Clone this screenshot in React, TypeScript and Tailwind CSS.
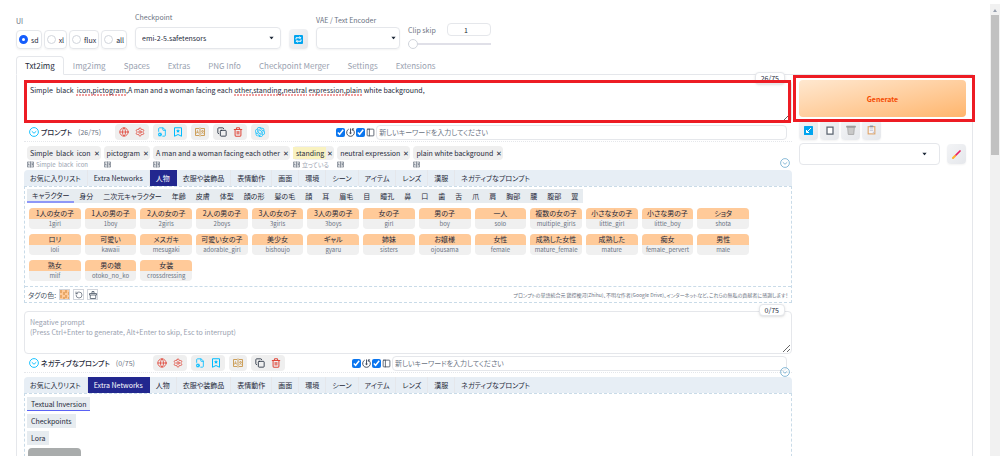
import React, { useState } from 'react';
import { Copy, FileCog, Globe, PanelLeft, RotateCcw, Settings, Trash2 } from 'lucide-react';
import { SiOpenai } from 'react-icons/si';

const mainTabs = ['Txt2img', 'Img2img', 'Spaces', 'Extras', 'PNG Info', 'Checkpoint Merger', 'Settings', 'Extensions'];

const categories = [
  'お気に入りリスト', 'Extra Networks', '人物', '衣服や装飾品', '表情動作', '画面', '環境',
  'シーン', 'アイテム', 'レンズ', '漢服', 'ネガティブなプロンプト',
];

const subCategories = [
  'キャラクター', '身分', '二次元キャラクター', '年齢', '皮膚', '体型', '顔の形', '髪の毛', '顔', '耳', '眉毛',
  '目', '瞳孔', '鼻', '口', '歯', '舌', '爪', '肩', '胸部', '腰', '腹部', '翼',
];

const keywords = [
  ['1人の女の子', '1girl'], ['1人の男の子', '1boy'], ['2人の女の子', '2girls'], ['2人の男の子', '2boys'],
  ['3人の女の子', '3girls'], ['3人の男の子', '3boys'], ['女の子', 'girl'], ['男の子', 'boy'], ['一人', 'solo'],
  ['複数の女の子', 'multiple_girls'], ['小さな女の子', 'little_girl'], ['小さな男の子', 'little_boy'], ['ショタ', 'shota'],
  ['ロリ', 'loli'], ['可愛い', 'kawaii'], ['メスガキ', 'mesugaki'], ['可愛い女の子', 'adorable_girl'], ['美少女', 'bishoujo'],
  ['ギャル', 'gyaru'], ['姉妹', 'sisters'], ['お嬢様', 'ojousama'], ['女性', 'female'], ['成熟した女性', 'mature_female'],
  ['成熟した', 'mature'], ['痴女', 'female_pervert'], ['男性', 'male'],
  ['熟女', 'milf'], ['男の娘', 'otoko_no_ko'], ['女装', 'crossdressing'],
];

const tags = [
  { text: 'Simple  black  icon', note: 'Simple  black  icon' },
  { text: 'pictogram', note: '' },
  { text: 'A man and a woman facing each other', note: '' },
  { text: 'standing', note: '立っている', marked: true },
  { text: 'neutral expression', note: '' },
  { text: 'plain white background', note: '' },
];

const Caret: React.FC<{ className?: string }> = ({ className = 'right-[7px]' }) => (
  <svg viewBox="0 0 6 4" className={`pointer-events-none absolute top-1/2 h-[3px] w-[5px] -translate-y-1/2 fill-gray-800 ${className}`}>
    <path d="M0 0h6L3 4z" />
  </svg>
);

const ChevronCircle: React.FC<{ className: string }> = ({ className }) => (
  <svg viewBox="0 0 20 20" className={className} fill="none" stroke="currentColor" strokeWidth="1.8">
    <circle cx="10" cy="10" r="8.8" />
    <path d="M5.5 8.5l4.5 4 4.5-4" />
  </svg>
);

const TranslateIcon: React.FC<{ className: string }> = ({ className }) => (
  <svg viewBox="0 0 20 20" className={className} fill="none" stroke="currentColor" strokeWidth="1.8">
    <path d="M8 3H1v14h7M12 3h7v14h-7M10 1v18" />
    <path d="M3 13l2-6 2 6M3.5 11h3M12.5 8h5M15 6v2M17 8c-1 3-2 4-4.5 5.5M13 8c1 3 2 4 4.5 5.5" strokeWidth="1.3" />
  </svg>
);

const BookmarkStar: React.FC = () => (
  <svg viewBox="0 0 20 20" className="size-[10px] text-sky-400" fill="none" stroke="currentColor" strokeWidth="2">
    <path d="M3 1.5h14v17l-7-3.5-7 3.5z" />
    <path d="M10 4l1.2 2.6 2.8.3-2.1 1.9.6 2.8-2.5-1.4-2.5 1.4.6-2.8L6 6.9l2.800-.3z" fill="currentColor" stroke="none" />
  </svg>
);

const ClockArrow: React.FC = () => (
  <svg viewBox="0 0 20 20" className="size-[9px] text-gray-700" fill="none" stroke="currentColor" strokeWidth="2">
    <path d="M6 2.5a8.5 8.5 0 1 0 8 0M10 1v8" />
    <circle cx="10" cy="11" r="1.5" fill="currentColor" />
    <path d="M14 6V2h4" />
  </svg>
);

const IconGroup: React.FC<{ children: React.ReactNode }> = ({ children }) => (
  <div className="flex h-4 items-center gap-1.5 rounded-sm bg-[#efefef] px-1">{children}</div>
);

const ToolButton: React.FC<{ label: string; children: React.ReactNode }> = ({ label, children }) => (
  <button aria-label={label} className="flex size-[10px] items-center justify-center">{children}</button>
);

const PromptToolbar: React.FC<{ title: string; count: string; withAi?: boolean }> = ({ title, count, withAi }) => (
  <div className="flex h-[19px] items-center border-b border-dotted border-gray-200 px-[5px]">
    <ChevronCircle className="size-[10px] text-sky-400" />
    <h2 className="ml-0.5 font-medium text-gray-800">{title}</h2>
    <span className="ml-1.5 text-gray-500">{count}</span>
    <div className={withAi ? 'ml-[14px] flex gap-1' : 'ml-[18px] flex gap-1'}>
      <IconGroup>
        <ToolButton label="Language"><Globe className="size-[10px] text-[#e0493c]" /></ToolButton>
        <ToolButton label="Settings"><Settings className="size-[10px] text-[#e0493c]" /></ToolButton>
      </IconGroup>
      <IconGroup>
        <ToolButton label="History"><FileCog className="size-[10px] text-sky-400" /></ToolButton>
        <ToolButton label="Favorites"><BookmarkStar /></ToolButton>
      </IconGroup>
      <IconGroup>
        <ToolButton label="Translate"><TranslateIcon className="size-[10px] text-[#c8964a]" /></ToolButton>
      </IconGroup>
      <IconGroup>
        <ToolButton label="Copy"><Copy className="size-[10px] text-gray-800" /></ToolButton>
        <ToolButton label="Delete"><Trash2 strokeWidth={2.5} className="size-[10px] text-[#e0493c]" /></ToolButton>
      </IconGroup>
      {withAi && (
        <IconGroup>
          <ToolButton label="ChatGPT"><SiOpenai className="size-[10px] text-sky-400" /></ToolButton>
        </IconGroup>
      )}
    </div>
    <div className="ml-[67px] flex flex-1 items-center gap-px">
      <input type="checkbox" defaultChecked aria-label="History" className="size-[9px] accent-[#0b76ef]" />
      <ClockArrow />
      <input type="checkbox" defaultChecked aria-label="Panel" className="size-[9px] accent-[#0b76ef]" />
      <PanelLeft className="size-[9px] text-gray-700" />
      <input
        type="text"
        aria-label="keyword"
        placeholder="新しいキーワードを入力してください"
        className="h-[15px] min-w-0 flex-1 rounded-sm border border-gray-200 px-0.5 placeholder:text-gray-500"
      />
    </div>
  </div>
);

const CategoryBar: React.FC<{ active: string }> = ({ active }) => (
  <div className="flex h-4 overflow-hidden rounded-t-sm bg-[#e7eef5]">
    {categories.map((name) => (
      <button
        key={name}
        className={`border-r px-1.5 last:border-r-0 ${name === active ? 'border-[#22278f] bg-[#22278f] text-white' : 'border-gray-200 text-gray-800'}`}
      >
        {name}
      </button>
    ))}
  </div>
);

const SquareButton: React.FC<{ label: string; children: React.ReactNode }> = ({ label, children }) => (
  <button aria-label={label} className="flex h-5 w-[19px] items-center justify-center rounded-sm bg-linear-to-br from-gray-100 to-gray-200 shadow-xs">
    {children}
  </button>
);

const App: React.FC = () => {
  const [ui, setUi] = useState('sd');
  const [prompt, setPrompt] = useState(
    'Simple  black  icon,pictogram,A man and a woman facing each other,standing,neutral expression,plain white background,'
  );

  return (
    <div className="flex h-screen overflow-hidden bg-white font-['Noto_Sans_CJK_JP',sans-serif] text-[7px] leading-[10px] text-gray-800 [font-feature-settings:'palt']">
      <main className="min-w-0 flex-1 pl-4 pr-[17px] pt-[13px]">
        {/* Top settings */}
        <header className="flex h-9 items-end gap-2">
          <fieldset>
            <legend className="mb-1 text-gray-500">UI</legend>
            <div className="flex gap-0.5">
              {['sd', 'xl', 'flux', 'all'].map((name) => (
                <label key={name} className="flex h-[19px] items-center gap-[3px] rounded-sm border border-gray-200 px-0.5 shadow-xs">
                  <input
                    type="radio"
                    name="ui"
                    checked={ui === name}
                    onChange={() => setUi(name)}
                    className="size-[9px] appearance-none rounded-full border border-gray-300 checked:border-[3px] checked:border-blue-600"
                  />
                  {name}
                </label>
              ))}
            </div>
          </fieldset>
          <div>
            <label htmlFor="checkpoint" className="mb-[5px] block text-gray-500">Checkpoint</label>
            <div className="relative">
              <select id="checkpoint" className="h-[22px] w-[146px] appearance-none rounded-sm border border-gray-200 pl-1.5 shadow-xs">
                <option>emi-2-5.safetensors</option>
              </select>
              <Caret />
            </div>
          </div>
          <SquareButton label="Refresh">
            <svg viewBox="0 0 18 18" className="size-[9px]" fill="none" stroke="white" strokeWidth="2">
              <rect width="18" height="18" rx="2" fill="#00a4ef" stroke="none" />
              <path d="M4 9V5.5h9M11 3l2.5 2.5L11 8M14 9v3.5H5M7 10l-2.5 2.5L7 15" />
            </svg>
          </SquareButton>
          <div>
            <label htmlFor="vae" className="mb-0.5 block text-gray-500">VAE / Text Encoder</label>
            <div className="relative">
              <select id="vae" className="h-[22px] w-[84px] appearance-none rounded-sm border border-gray-200 shadow-xs">
                <option></option>
              </select>
              <Caret className="right-1" />
            </div>
          </div>
          <div className="w-[83px]">
            <div className="flex items-center justify-between">
              <label htmlFor="clip" className="text-gray-500">Clip skip</label>
              <input aria-label="Clip skip value" defaultValue="1" className="h-[13px] w-11 rounded-sm border border-gray-200 px-4" />
            </div>
            <input
              id="clip"
              type="range"
              min="1"
              max="12"
              defaultValue="1"
              className="mt-0.5 block h-[11px] w-full appearance-none bg-[linear-gradient(#e0e0e8,#e0e0e8)] bg-[length:100%_2px] bg-center bg-no-repeat [&::-webkit-slider-thumb]:size-[10px] [&::-webkit-slider-thumb]:appearance-none [&::-webkit-slider-thumb]:rounded-full [&::-webkit-slider-thumb]:border [&::-webkit-slider-thumb]:border-gray-300 [&::-webkit-slider-thumb]:bg-white"
            />
          </div>
        </header>

        {/* Tabs */}
        <nav className="mt-[7px] flex h-[18px]">
          {mainTabs.map((tab, i) => (
            <button
              key={tab}
              className={`relative -mb-px rounded-t-sm border px-2 text-[8px] ${i === 0 ? 'border-gray-200 border-b-white bg-white text-gray-800' : 'border-transparent text-gray-400'}`}
            >
              {tab}
            </button>
          ))}
        </nav>

        <div className="flex gap-[7px] border border-gray-200 pl-[7px] pr-1.5 pt-[5px]">
          <section className="min-w-0 flex-1">
            <div className="relative">
              <textarea
                aria-label="Prompt"
                value={prompt}
                onChange={(e) => setPrompt(e.target.value)}
                className="block h-[43px] w-full rounded-sm border border-gray-200 px-[5px] pt-1"
              />
              <svg className="pointer-events-none absolute left-0 top-[14px] h-[2px] w-full" stroke="#e03c3c" strokeWidth="1" strokeDasharray="2 1">
                <path d="M52 1h50M210 1h73M285 1h53" />
              </svg>
              <span className="absolute -top-2 right-[7px] rounded-sm border border-gray-200 bg-white px-[5px] shadow-sm">26/75</span>
              <div className="pointer-events-none absolute inset-0 right-px border-[3px] border-[#ed1c24]" />
            </div>

            <PromptToolbar title="プロンプト" count="(26/75)" withAi />

            <div className="flex h-7 items-end">
              <ul className="flex h-6 flex-1 gap-[3px] pl-[3px]">
                {tags.map((tag) => (
                  <li key={tag.text}>
                    <div className="flex h-[14px] items-center rounded-sm bg-[#efefef]">
                      <span className={`whitespace-pre py-px pl-[3px] pr-0.5 ${tag.marked ? 'bg-[#f9f2c0]' : ''}`}>{tag.text}</span>
                      <button aria-label="Remove" className="px-px">✕</button>
                    </div>
                    <div className="flex h-[9px] items-center gap-0.5 whitespace-pre text-[6px] text-gray-400">
                      <TranslateIcon className="size-[7px] text-gray-600" />
                      {tag.note}
                    </div>
                  </li>
                ))}
              </ul>
              <ChevronCircle className="mb-0.5 mr-0.5 size-[10px] text-sky-700/50" />
            </div>

            <CategoryBar active="人物" />
            <div className="border border-dashed border-[#c9dbe8]">
              <div className="ml-0.5 mt-0.5 flex">
                {subCategories.map((name, i) => (
                  <button
                    key={name}
                    className={`h-[14px] bg-[#e7ecf0] px-[5px] ${i === 0 ? 'border-b-2 border-[#8e97f7]' : ''}`}
                  >
                    {name}
                  </button>
                ))}
              </div>
              <div className="grid grid-cols-13 gap-x-1 gap-y-[5px] py-[5px] pl-1 pr-[42px]">
                {keywords.map(([ja, en]) => (
                  <button key={en} className="h-[21px] overflow-hidden whitespace-nowrap rounded-sm bg-[#f0f0f0] text-center">
                    <span className="block h-[11px] bg-[#ffca99]">{ja}</span>
                    <span className="block text-[6px] text-gray-500">{en}</span>
                  </button>
                ))}
              </div>
              <div className="flex h-4 items-center gap-[3px] border-t border-dashed border-[#c9dbe8] px-[3px]">
                <span className="text-gray-600">タグの色:</span>
                <button aria-label="Tag color" className="size-[11px] border border-gray-300 bg-[conic-gradient(#ffca99_25%,#e8a868_0_50%,#ffca99_0_75%,#e8a868_0)] bg-[length:5px_5px]" />
                <button aria-label="Reset" className="flex size-[11px] items-center justify-center border border-gray-300">
                  <RotateCcw className="size-2 text-gray-600" />
                </button>
                <button aria-label="Clear" className="flex size-[11px] items-center justify-center border border-gray-300">
                  <svg viewBox="0 0 16 16" className="size-2 text-gray-600" fill="none" stroke="currentColor" strokeWidth="1.6">
                    <path d="M6 5V1h4v4M1 5h14v3H1zM2.5 8v7h11V8" />
                  </svg>
                </button>
                <p className="ml-auto text-[5px] text-gray-500">
                  プロンプトの単語統合元 鶏控梗河(Zhihu)、不明な作者(Google Drive)、インターネットなど、これらの無私の貢献者に感謝します！
                </p>
              </div>
            </div>

            <div className="relative mt-2">
              <textarea
                aria-label="Negative prompt"
                placeholder={'Negative prompt\n(Press Ctrl+Enter to generate, Alt+Enter to skip, Esc to interrupt)'}
                className="block h-[43px] w-full rounded-sm border border-gray-200 px-[5px] pt-[5px] placeholder:text-gray-400"
              />
              <span className="absolute -top-[7px] right-[7px] rounded-sm border border-gray-200 bg-white px-[5px] shadow-sm">0/75</span>
            </div>

            <PromptToolbar title="ネガティブなプロンプト" count="(0/75)" />
            <div className="flex h-1 items-end justify-end pr-0.5">
              <ChevronCircle className="relative size-[10px] shrink-0 text-sky-700/50" />
            </div>
            <CategoryBar active="Extra Networks" />
            <div className="flex flex-col items-start gap-[3px] border border-dashed border-[#c9dbe8] pb-5 pl-0.5 pt-[3px]">
              {['Textual Inversion', 'Checkpoints', 'Lora'].map((name, i) => (
                <button key={name} className={`h-[14px] bg-[#e7ecf0] px-1 ${i === 0 ? 'border-b border-[#5a62f5]' : ''}`}>
                  {name}
                </button>
              ))}
              <div className="ml-px h-16 w-[53px] rounded-sm bg-[#a9acac]" />
            </div>
          </section>

          <aside className="w-[167px]">
            <div className="relative">
              <button className="block h-[37px] w-full rounded-sm bg-linear-to-br from-[#ffe8d0] to-[#ffb56b] font-bold text-orange-600">Generate</button>
              <div className="pointer-events-none absolute -bottom-[5px] -left-1.5 -right-[9px] -top-[5px] border-[3px] border-[#ed1c24]" />
            </div>
            <div className="mt-[3px] flex gap-0.5">
              <SquareButton label="Read parameters">
                <svg viewBox="0 0 18 18" className="size-[9px]" fill="none" stroke="white" strokeWidth="2">
                  <rect width="18" height="18" rx="1" fill="#00a4ef" stroke="none" />
                  <path d="M14 4L5 13M5 8v5h5" />
                </svg>
              </SquareButton>
              <SquareButton label="Paste">
                <svg viewBox="0 0 16 18" className="h-[9px] w-2" fill="white" stroke="#5b6470" strokeWidth="2.5">
                  <path d="M2 2h12v14H2z" />
                </svg>
              </SquareButton>
              <SquareButton label="Clear prompt">
                <svg viewBox="0 0 18 18" className="size-[10px]" fill="#c9c9c9" stroke="#a3a3a3" strokeWidth="1.5">
                  <path d="M3 4l1 13h10l1-13z" />
                  <path d="M1 2h16v2H1z" fill="#8a8a8a" />
                </svg>
              </SquareButton>
              <SquareButton label="Apply styles">
                <svg viewBox="0 0 16 18" className="h-[10px] w-[9px]">
                  <path d="M1 2h14v15H1z" fill="#e0a468" />
                  <path d="M3 4h10v11H3z" fill="#f5f5fa" />
                  <path d="M5 1h6v3H5z" fill="#8b93a3" />
                  <path d="M5 7h6M5 10h6" stroke="#a9adc0" />
                  <path d="M9 15l4-4v4z" fill="#c3c8dc" />
                </svg>
              </SquareButton>
            </div>
            <div className="mt-[3px] flex items-center justify-between">
              <div className="relative">
                <select aria-label="Styles" className="block h-[22px] w-[141px] appearance-none rounded-sm border border-gray-200">
                  <option></option>
                </select>
                <Caret className="right-[13px]" />
              </div>
              <SquareButton label="Edit styles">
                <svg viewBox="0 0 18 18" className="size-[9px]" strokeLinecap="round">
                  <path d="M7 11l9-9" stroke="#e91e63" strokeWidth="3.5" />
                  <path d="M2 16l4-4" stroke="#ffb02e" strokeWidth="4" />
                </svg>
              </SquareButton>
            </div>
          </aside>
        </div>
      </main>

      {/* Scroll bar */}
      <div className="mt-1 flex w-[10px] flex-col items-center bg-[#f1f1f1]">
        <svg viewBox="0 0 10 11" className="h-[11px] w-[10px] fill-gray-400">
          <path d="M3 8h4L5 5z" />
        </svg>
        <div className="h-[140px] w-2 bg-[#c1c1c1]" />
      </div>
    </div>
  );
};

export default App;
